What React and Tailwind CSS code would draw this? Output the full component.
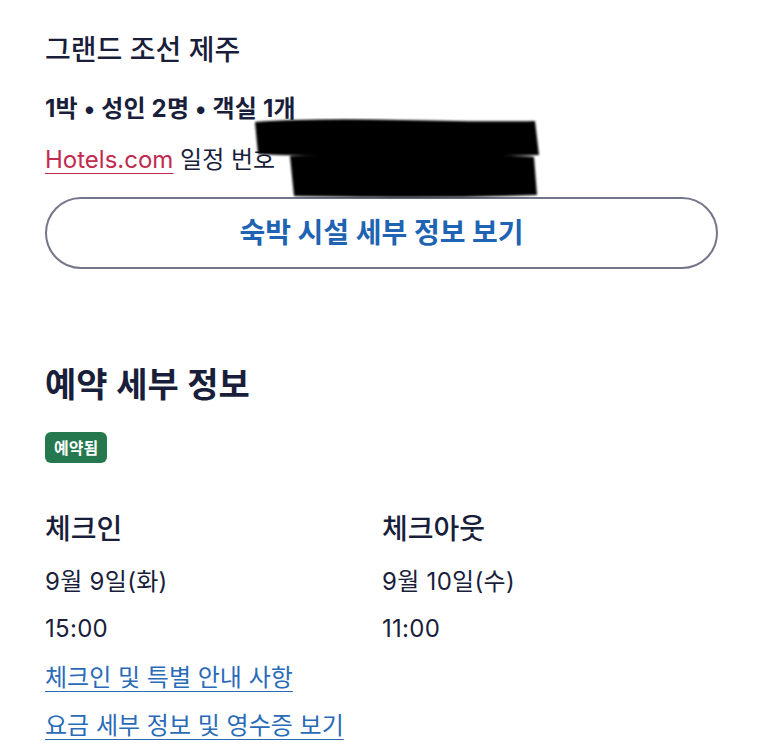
import React from 'react';

const font = { fontFamily: '"Inter", "Noto Sans CJK KR", sans-serif' };

// 가려진 일정 번호 (검은 낙서)
const Redaction = () => (
    <svg className="absolute left-[252px] top-[118px]" width="292" height="82" viewBox="0 0 292 82">
        <defs>
            <filter id="soft" x="-5%" y="-20%" width="110%" height="140%">
                <feGaussianBlur stdDeviation="1.2" />
            </filter>
        </defs>
        <g filter="url(#soft)" fill="#050505">
            <path d="M3 4 Q60 0 150 2 T283 3 L287 37 Q200 40 120 39 T6 36 Z" />
            <path d="M38 38 Q120 36 200 37 T282 39 L285 77 Q200 80 120 79 T42 78 Z" />
        </g>
    </svg>
);

export default function App() {
    return (
        <div className="relative w-[763px] h-[750px] bg-white overflow-hidden text-[#191e3b]" style={font}>
            <div className="pl-[45px] pr-[45px] pt-[30px]">
                <h1 className="text-[28px] font-medium leading-[40px]">그랜드 조선 제주</h1>
                <p className="mt-[21px] text-[24px] font-bold leading-[36px] tracking-[0.2px]">1박 • 성인 2명 • 객실 1개</p>
                <p className="mt-[15px] text-[24px] leading-[36px]">
                    <span className="text-[#c22a4f] underline decoration-1 underline-offset-[5px]">Hotels.com</span> 일정 번호
                </p>
                <button type="button" className="mt-[19px] w-[673px] h-[72px] rounded-full border-2 border-[#74778a] flex items-center justify-center text-[28px] font-bold text-[#1f63b3]">
                    숙박 시설 세부 정보 보기
                </button>

                <h2 className="mt-[92px] text-[34px] font-semibold leading-[48px]">예약 세부 정보</h2>
                <div className="mt-[23px] inline-flex items-center h-[31px] px-[9px] rounded-[6px] bg-[#25784e] text-white text-[16px] font-bold">
                    예약됨
                </div>

                <div className="mt-[46px] grid grid-cols-[337px_1fr]">
                    <div>
                        <div className="text-[28px] font-medium leading-[40px]">체크인</div>
                        <div className="mt-[15px] text-[24px] leading-[36px] tracking-[0.3px]">9월 9일(화)</div>
                        <div className="mt-[11px] text-[24px] leading-[36px] tracking-[0.3px]">15:00</div>
                    </div>
                    <div>
                        <div className="text-[28px] font-medium leading-[40px]">체크아웃</div>
                        <div className="mt-[15px] text-[24px] leading-[36px] tracking-[0.3px]">9월 10일(수)</div>
                        <div className="mt-[11px] text-[24px] leading-[36px] tracking-[0.3px]">11:00</div>
                    </div>
                </div>
                <div className="mt-[13px] flex flex-col gap-[12px] items-start text-[24px] leading-[36px] text-[#2a6bb8]">
                    <a href="#" className="underline decoration-1 underline-offset-[5px]">체크인 및 특별 안내 사항</a>
                    <a href="#" className="underline decoration-1 underline-offset-[5px]">요금 세부 정보 및 영수증 보기</a>
                </div>
            </div>
            <Redaction />
        </div>
    );
}
